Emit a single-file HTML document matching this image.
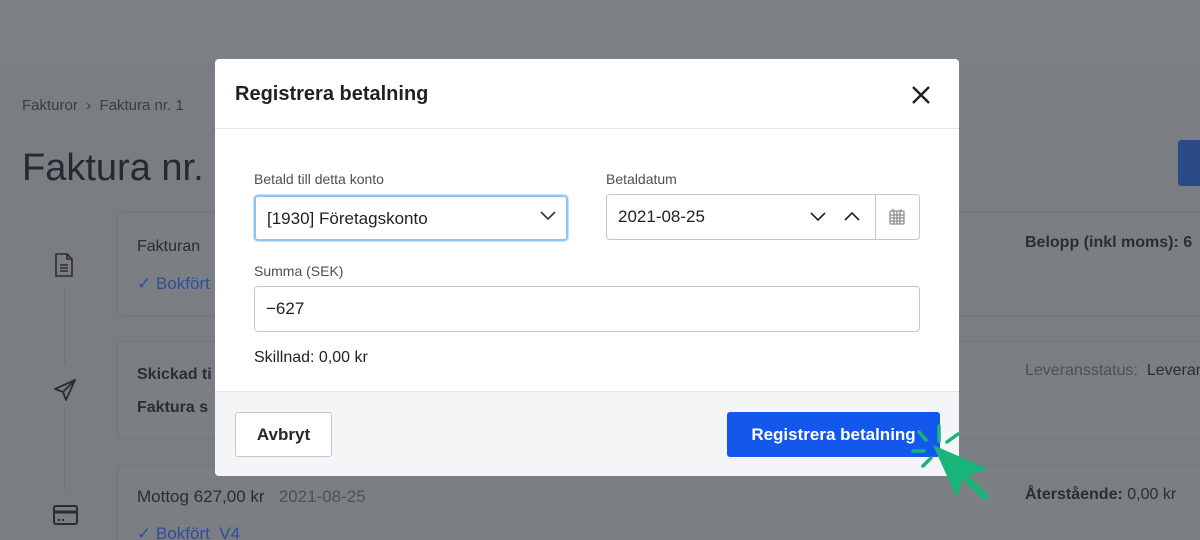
<!DOCTYPE html>
<html><head><meta charset="utf-8"><style>
*{box-sizing:border-box;margin:0;padding:0}
html,body{width:1200px;height:540px;overflow:hidden}
body{background:#7a7d82;font-family:"Liberation Sans","DejaVu Sans",sans-serif;position:relative;color:#23272e}
.hdr{position:absolute;left:0;top:0;width:1200px;height:66px;background:#7d8085;border-bottom:1px solid #75787d}
.a{position:absolute;white-space:nowrap}
.card{position:absolute;left:117px;width:1100px;border:1px solid #72767b;border-radius:4px;background:#7b7e83}
.line{position:absolute;left:64px;width:1px;background:#6e7176}
.modal{position:absolute;left:215px;top:59px;width:744px;height:417px;background:#fff;border-radius:4px;overflow:hidden}
.mh{height:70px;border-bottom:1px solid #e3e5e8;padding:24px 20px;font-size:20px;font-weight:bold;color:#1d2026}
.lbl{position:absolute;font-size:14px;color:#4a5059}
.inp{position:absolute;border:1px solid #c3c7cd;border-radius:4px;height:46px;font-size:17px;padding:12px 11px;color:#1d2026}
.foot{position:absolute;left:0;top:332px;width:744px;height:85px;background:#f4f5f7;border-top:1px solid #e3e5e8}
</style></head><body>
<div class="hdr"></div>
<div class="a" style="left:22px;top:97px;font-size:15px;color:#3a3e45">Fakturor &nbsp;›&nbsp; Faktura nr. 1</div>
<div class="a" style="left:22px;top:147px;font-size:38px;color:#26292f">Faktura nr. 1</div>
<div class="a" style="left:1178px;top:140px;width:30px;height:46px;background:#2c4a88;border-radius:3px"></div>
<div class="line" style="top:290px;height:75px"></div>
<div class="line" style="top:410px;height:80px"></div>
<svg class="a" style="left:54px;top:253px" width="20" height="24" viewBox="0 0 20 24" fill="none" stroke="#2a2d33" stroke-width="1.6"><path d="M2 1h11l5 5v17H2z M13 1v5h5 M6 12h8 M6 15h8 M6 18h8"/></svg>
<svg class="a" style="left:53px;top:378px" width="24" height="24" viewBox="0 0 24 24" fill="none" stroke="#2a2d33" stroke-width="1.8" stroke-linejoin="round"><path d="M22 2L2 11l8 3 3 8z M10 14l12-12"/></svg>
<svg class="a" style="left:53px;top:505px" width="25" height="20" viewBox="0 0 25 20" fill="none" stroke="#2a2d33" stroke-width="2"><rect x="1" y="1" width="23" height="18" rx="2"/><path d="M1 7h23" stroke-width="3"/><path d="M5 15h2M9 15h2"/></svg>
<div class="card" style="top:212px;height:104px"></div>
<div class="card" style="top:341px;height:98px"></div>
<div class="card" style="top:465px;height:100px"></div>
<div class="a" style="left:137px;top:238px;font-size:16px;color:#2a2d33">Fakturan</div>
<div class="a" style="left:137px;top:274px;font-size:17px;color:#2d4e9a">✓ Bokfört</div>
<div class="a" style="left:137px;top:366px;font-size:16px;font-weight:bold;color:#2a2d33">Skickad ti</div>
<div class="a" style="left:137px;top:399px;font-size:16px;font-weight:bold;color:#2a2d33">Faktura s</div>
<div class="a" style="left:137px;top:487px;font-size:17px;color:#2a2d33">Mottog 627,00 kr &nbsp;&nbsp;<span style="color:#4d5158">2021-08-25</span></div>
<div class="a" style="left:137px;top:524px;font-size:17px;color:#2d4e9a">✓ Bokfört &nbsp;V4</div>
<div class="a" style="left:1025px;top:234px;font-size:16px;font-weight:bold;color:#2a2d33">Belopp (inkl moms): 6</div>
<div class="a" style="left:1025px;top:362px;font-size:16px;color:#4d5158">Leveransstatus: &nbsp;<span style="color:#2a2d33">Leveran</span></div>
<div class="a" style="left:1025px;top:486px;font-size:16px;color:#2a2d33"><b>Återstående:</b> 0,00 kr</div>

<div class="modal">
<div class="mh">Registrera betalning</div>
<svg class="a" style="left:697px;top:27px" width="18" height="18" viewBox="0 0 18 18" stroke="#1d2026" stroke-width="2.4"><path d="M1 1l16 16M17 1L1 17"/></svg>
<div class="lbl" style="left:39px;top:112px">Betald till detta konto</div>
<div class="inp" style="left:39px;top:136px;width:314px;border:2px solid #8fc3f5;box-shadow:0 0 0 1px #c9e2fb">[1930] Företagskonto</div>
<svg class="a" style="left:325px;top:152px" width="16" height="10" viewBox="0 0 16 10" fill="none" stroke="#333" stroke-width="1.6"><path d="M1 1l7 7 7-7"/></svg>
<div class="lbl" style="left:391px;top:112px">Betaldatum</div>
<div class="inp" style="left:391px;top:135px;width:314px">2021-08-25</div>
<div class="a" style="left:660px;top:136px;width:1px;height:45px;background:#c3c7cd"></div>
<svg class="a" style="left:595px;top:153px" width="16" height="10" viewBox="0 0 16 10" fill="none" stroke="#222" stroke-width="1.6"><path d="M1 1l7 7 7-7"/></svg>
<svg class="a" style="left:629px;top:152px" width="16" height="10" viewBox="0 0 16 10" fill="none" stroke="#222" stroke-width="1.6"><path d="M1 9l7-7 7 7"/></svg>
<svg class="a" style="left:674px;top:149px" width="16" height="17" viewBox="0 0 16 17" fill="none" stroke="#8a8f96" stroke-width="1.3"><rect x="1" y="3" width="14" height="13" rx="1"/><path d="M1 7h14M1 10h14M1 13h14M5 3v13M8 3v13M11 3v13M4 1v3M12 1v3"/></svg>
<div class="lbl" style="left:39px;top:204px">Summa (SEK)</div>
<div class="inp" style="left:39px;top:227px;width:666px">−627</div>
<div class="a" style="left:39px;top:290px;font-size:16px;color:#1d2026">Skillnad: 0,00 kr</div>
<div class="foot">
<div class="a" style="left:20px;top:20px;width:97px;height:45px;border:1px solid #c3c7cd;background:#fff;border-radius:3px;font-size:17px;font-weight:bold;text-align:center;line-height:43px">Avbryt</div>
<div class="a" style="left:512px;top:20px;width:213px;height:45px;background:#1357ec;border-radius:3px;color:#fff;font-size:17px;font-weight:bold;text-align:center;line-height:45px">Registrera betalning</div>
</div>
</div>
<svg class="a" style="left:900px;top:414px" width="100" height="100" viewBox="0 0 100 100">
<g stroke="#19b47a" stroke-width="3.5" stroke-linecap="round"><path d="M19 18l7 8M39 12v15M58 20l-11 8M13 37h11M23 52l8-8"/></g>
<path d="M33 31L57 84l6-21 25-8z" fill="#19b47a"/><path d="M60 58l25 25" stroke="#19b47a" stroke-width="7" stroke-linecap="round"/>
</svg>
</body></html>
